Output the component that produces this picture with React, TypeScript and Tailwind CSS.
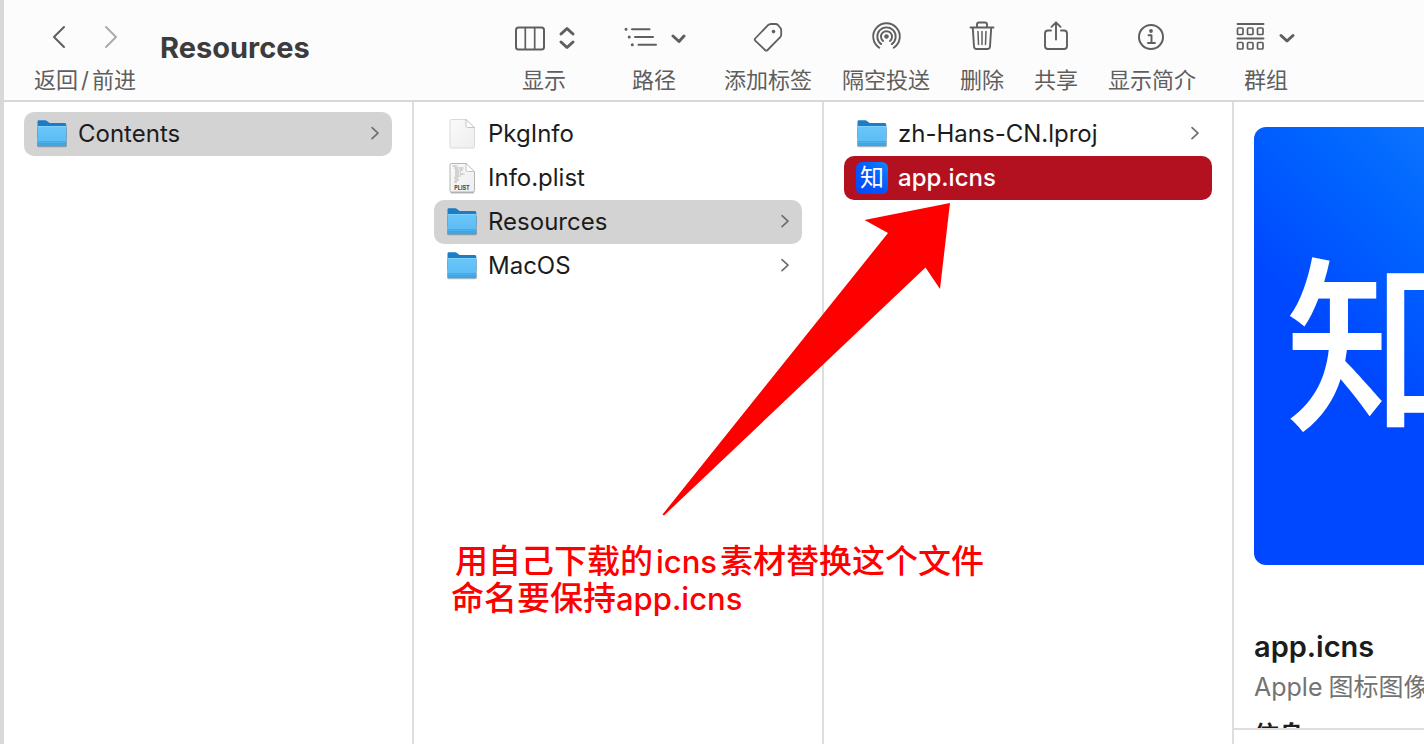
import React from 'react';

type Entry = {
  name: string;
  kind: 'folder' | 'blank' | 'plist' | 'app';
  state?: 'open' | 'active';
};

const columns: { id: string; entries: Entry[] }[] = [
  { id: 'app', entries: [{ name: 'Contents', kind: 'folder', state: 'open' }] },
  {
    id: 'Contents',
    entries: [
      { name: 'PkgInfo', kind: 'blank' },
      { name: 'Info.plist', kind: 'plist' },
      { name: 'Resources', kind: 'folder', state: 'open' },
      { name: 'MacOS', kind: 'folder' },
    ],
  },
  {
    id: 'Resources',
    entries: [
      { name: 'zh-Hans-CN.lproj', kind: 'folder' },
      { name: 'app.icns', kind: 'app', state: 'active' },
    ],
  },
];

function FolderIcon() {
  return (
    <svg className="size-8 shrink-0" viewBox="0 0 32 32" aria-hidden="true">
      <defs>
        <linearGradient id="folder" x1="0" y1="0" x2="0" y2="1">
          <stop offset="0" stopColor="#6ac6fa" />
          <stop offset="0.75" stopColor="#5dbdf4" />
          <stop offset="0.86" stopColor="#46aeea" />
          <stop offset="1" stopColor="#3c9fdd" />
        </linearGradient>
      </defs>
      <rect x="1" y="9" width="30" height="20.200" rx="1.500" fill="#000" opacity="0.25" />
      <path d="M1.500 3.600q0-1.400 1.400-1.400h6.300q1 0 1.800.7l2.200 1.800q.6.400 1.500.4H28.800q1.500 0 1.500 1.500V20H1.500z" fill="#1c7cc6" />
      <path d="M1.500 9.300Q1.500 8 3 8H28.800q1.500 0 1.500 1.300V27q0 1.200-1.500 1.200H3q-1.500 0-1.500-1.200z" fill="url(#folder)" />
      <path d="M2 8.500H29.800" stroke="#8ad6fd" strokeWidth="0.800" />
      <path d="M1.500 23.500H30.300M1.500 25.300H30.300" stroke="#379edc" strokeWidth="0.600" />
    </svg>
  );
}

function PageIcon({ plist = false }: { plist?: boolean }) {
  return (
    <svg className="size-8 shrink-0" viewBox="0 0 32 32" aria-hidden="true">
      <defs>
        <linearGradient id="page" x1="0" y1="0" x2="1" y2="1">
          <stop offset="0" stopColor="#fafafa" />
          <stop offset="1" stopColor="#eeeeee" />
        </linearGradient>
      </defs>
      {plist && <path d="M5 30.800H27.500" stroke="#8c8c8c" strokeWidth="1" strokeLinecap="round" />}
      <path
        d="M5.500 1.500H20L28.500 9.500V28.500q0 1.500-1.500 1.500H5.500q-1.500 0-1.500-1.500V3q0-1.500 1.500-1.500z"
        fill="url(#page)"
        stroke={plist ? '#b4b4b4' : '#d9d9d9'}
        strokeWidth="1"
      />
      <path d="M20 1.500L28.500 9.500H21.500Q20 9.500 20 8z" fill="#fff" stroke="#c4c4c4" strokeWidth="1" />
      {plist && (
        <>
          <path
            d="M6.500 4h5.500M8 6h10M9 8h8M9 10h6M9 12h10M9 14h6M8 16h5M9 18h4M8 20h3"
            stroke="#b0b0b0"
            strokeWidth="1.200"
            strokeDasharray="4 0.700"
            fill="none"
          />
          <text x="16" y="27.800" textAnchor="middle" fontSize="5.500" fontWeight="700" fill="#444">
            PLIST
          </text>
        </>
      )}
    </svg>
  );
}

function EntryIcon({ kind }: { kind: Entry['kind'] }) {
  if (kind === 'folder') return <FolderIcon />;
  if (kind === 'app') {
    return (
      <span className="flex size-8 shrink-0 items-center justify-center rounded-md bg-linear-to-bl from-[#1688ff] via-[#0756ff] to-[#004bff] text-[24px] leading-8 font-normal text-white">
        知
      </span>
    );
  }
  return <PageIcon plist={kind === 'plist'} />;
}

function Row({ entry }: { entry: Entry }) {
  const tone =
    entry.state === 'active'
      ? 'bg-[#b3111f] text-white font-medium'
      : entry.state === 'open'
        ? 'bg-[#d3d3d3] text-[#1c1c1c]'
        : 'text-[#1c1c1c]';
  return (
    <li>
      <button type="button" className={`flex h-11 w-full items-center gap-[10px] rounded-[10px] px-3 text-left text-[24px] leading-8 ${tone}`}>
        <EntryIcon kind={entry.kind} />
        <span className="flex-1 truncate">{entry.name}</span>
        {entry.kind === 'folder' && (
          <svg className="h-4 w-[10px]" viewBox="0 0 10 16" fill="none" stroke="#6e6e6e" strokeWidth="1.700" strokeLinecap="round" strokeLinejoin="round" aria-hidden="true">
            <path d="M2 1.700L8 7.200L2 12.700" />
          </svg>
        )}
      </button>
    </li>
  );
}

function Glyph({ width, children }: { width: number; children: React.ReactNode }) {
  return (
    <svg width={width} height="36" viewBox={`0 0 ${width} 36`} fill="none" stroke="#5f5f5f" strokeWidth="2" strokeLinecap="round" strokeLinejoin="round" aria-hidden="true">
      {children}
    </svg>
  );
}

const tools = [
  {
    label: '显示',
    wide: true,
    icon: (
      <Glyph width={64}>
        <rect x="4" y="9.500" width="28" height="22" rx="2.500" />
        <path d="M13.300 10V31M22.700 10V31" strokeWidth="1.700" />
        <path d="M49 16L55 10.500L61 16M49 24L55 29.500L61 24" strokeWidth="3" />
      </Glyph>
    ),
  },
  {
    label: '路径',
    wide: true,
    icon: (
      <Glyph width={64}>
        <path d="M10 11.300H27.500M13 19H31M16.500 26.700H34" />
        <path d="M4 11.300h.01M7.200 19h.01M10.300 26.700h.01" strokeWidth="3" />
        <path d="M51 18L57 23.500L62 18" strokeWidth="3" />
      </Glyph>
    ),
  },
  {
    label: '添加标签',
    icon: (
      <Glyph width={32}>
        <path d="M3.200 20.500L15.800 7.300Q17.300 6 19 6H23.500Q25 6 26 7L28.500 10Q29.200 11 29.200 12.500V16.500Q29.200 18.200 28 19.400L15.600 32Q14.300 33.200 13 32L3.200 22.700Q2.200 21.600 3.200 20.500z" strokeWidth="1.800" />
        <circle cx="21.500" cy="13.600" r="1.800" fill="#5f5f5f" stroke="none" />
      </Glyph>
    ),
  },
  {
    label: '隔空投送',
    icon: (
      <Glyph width={32}>
        <circle cx="16.500" cy="18.500" r="2.300" fill="#5f5f5f" stroke="none" />
        <path d="M13.100 23A5.500 5.500 0 1 1 19.900 23M11.200 26.100A9.200 9.200 0 1 1 21.800 26.100M9.300 29.700A13.300 13.300 0 1 1 23.700 29.700" strokeWidth="1.900" />
      </Glyph>
    ),
  },
  {
    label: '删除',
    icon: (
      <Glyph width={32}>
        <path d="M4.500 9.500H27.500M11 9V6.500Q11 4.500 13 4.500H19Q21 4.500 21 6.500V9M6.800 10L8 28.500Q8.200 31 10.500 31H21.500Q23.800 31 24 28.500L25.200 10" strokeWidth="1.900" />
        <path d="M12 13.500L12.500 26.500M16 13.500V26.500M20 13.500L19.500 26.500" strokeWidth="1.500" />
      </Glyph>
    ),
  },
  {
    label: '共享',
    icon: (
      <Glyph width={32}>
        <path d="M11 12.500H8Q5 12.500 5 15.500V28Q5 31 8 31H24Q27 31 27 28V15.500Q27 12.500 24 12.500H21M16 21.500V4.500M11.500 8.800L16 4.300L20.500 8.800" strokeWidth="1.900" />
      </Glyph>
    ),
  },
  {
    label: '显示简介',
    icon: (
      <Glyph width={32}>
        <circle cx="15" cy="19" r="12" />
        <circle cx="15" cy="13" r="1.900" fill="#5f5f5f" stroke="none" />
        <path d="M12.500 17.300H15.500V24.700M12 25H19" strokeWidth="1.900" />
      </Glyph>
    ),
  },
  {
    label: '群组',
    wide: true,
    icon: (
      <Glyph width={64}>
        <path d="M3.500 6H29.500M3.500 20.500H29.500" strokeWidth="1.900" />
        <g strokeWidth="1.700">
          <rect x="3.500" y="10" width="5.500" height="6.500" rx="1" />
          <rect x="13.500" y="10" width="5.500" height="6.500" rx="1" />
          <rect x="23.500" y="10" width="5.500" height="6.500" rx="1" />
          <rect x="3.500" y="24.500" width="5.500" height="6.500" rx="1" />
          <rect x="13.500" y="24.500" width="5.500" height="6.500" rx="1" />
          <rect x="23.500" y="24.500" width="5.500" height="6.500" rx="1" />
        </g>
        <path d="M47 17.500L53 23L59 17.500" strokeWidth="3" />
      </Glyph>
    ),
  },
];

function Toolbar() {
  return (
    <header className="flex h-[102px] shrink-0 border-b-2 border-[#d8d8d8] bg-[#fcfcfc] pl-[30px] text-[22px] leading-8 text-[#5e5e5e]">
      {/* Back / forward */}
      <div className="flex w-[102px] shrink-0 flex-col items-center pt-[18px]">
        <div className="flex gap-4">
          <button type="button" aria-label="返回">
            <Glyph width={36}>
              <path d="M23 9L13 19L23 29" />
            </Glyph>
          </button>
          <button type="button" aria-label="前进" className="opacity-50">
            <Glyph width={36}>
              <path d="M13 9L23 19L13 29" />
            </Glyph>
          </button>
        </div>
        <span className="mt-[10px] whitespace-nowrap">
          返回<span className="mx-[3px]">/</span>前进
        </span>
      </div>

      <h1 className="ml-6 w-[344px] shrink-0 pt-8 text-[29px] leading-8 font-bold text-[#3c3c3c]">Resources</h1>

      <div className="flex shrink-0 gap-[30px] pt-[18px]">
        {tools.map((tool) => (
          <button key={tool.label} type="button" className={`flex flex-col items-center gap-[10px] ${tool.wide ? 'w-20' : ''}`}>
            {tool.icon}
            <span>{tool.label}</span>
          </button>
        ))}
      </div>
    </header>
  );
}

function Preview() {
  return (
    <aside className="flex min-w-0 flex-1 flex-col overflow-hidden">
      <div className="min-h-0 flex-1 overflow-hidden pt-[25px] pl-5">
        <div className="flex size-[438px] items-center justify-center rounded-xl bg-linear-to-bl from-[#1aa0ff] via-[#0d74ff] via-30% to-[#0048ff] to-65% pt-1 text-[188px] leading-none font-medium whitespace-nowrap text-white">
          知乎
        </div>
        <h2 className="mt-[62px] text-[29px] leading-10 font-semibold text-[#1c1c1c]">app.icns</h2>
        <p className="text-[25px] leading-10 whitespace-nowrap text-[#737373]">
          <span className="mr-[6px]">Apple</span>图标图像
        </p>
        <h3 className="mt-3 text-[25px] leading-8 font-bold text-[#1c1c1c]">信息</h3>
      </div>
      <div className="h-4 shrink-0 border-t-2 border-[#dedede]" />
    </aside>
  );
}

export default function App() {
  return (
    <div className="relative flex h-screen flex-col overflow-hidden border-l-4 border-[#d8d8d8] bg-white font-['Inter','Noto_Sans_CJK_SC',sans-serif]">
      <Toolbar />
      <main className="flex min-h-0 flex-1">
        {columns.map((column) => (
          <ul key={column.id} className="w-[410px] shrink-0 border-r-2 border-[#dedede] px-5 pt-[10px]">
            {column.entries.map((entry) => (
              <Row key={entry.name} entry={entry} />
            ))}
          </ul>
        ))}
        <Preview />
      </main>

      {/* Arrow and note drawn over the columns */}
      <svg className="pointer-events-none absolute top-[200px] left-[656px]" width="300" height="320" viewBox="660 200 300 320" aria-hidden="true">
        <path d="M950 203L940 289L925.500 267.500L664 515.500L662.500 514.500L888 233L864.500 220z" fill="#ff0000" />
      </svg>
      <p className="absolute top-[543px] left-[447px] text-[33px] leading-9 font-medium whitespace-nowrap text-[#ff0000]">
        <span className="ml-1">用自己下载的</span>
        <span className="mx-[3px] text-[31px]">icns</span>素材替换这个文件
        <br />
        命名要保持<span className="text-[31px]">app.icns</span>
      </p>
    </div>
  );
}
